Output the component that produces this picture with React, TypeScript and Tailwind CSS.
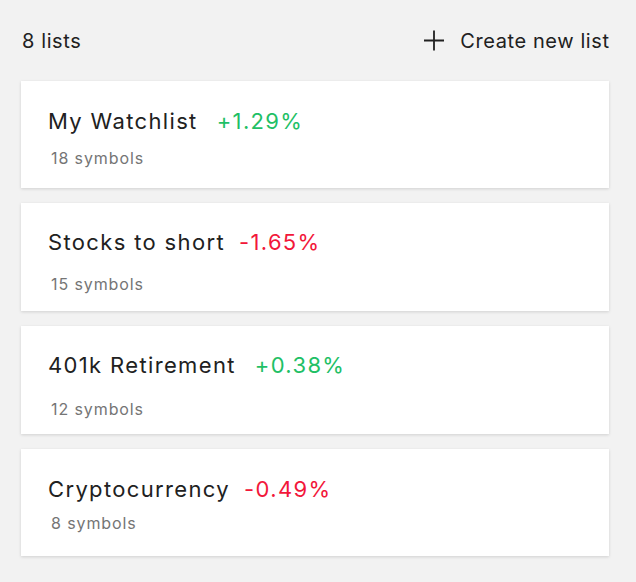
type WatchList = {
  name: string;
  change: string;
  positive: boolean;
  symbols: number;
  cardClass: string;
  countClass: string;
};

const lists: WatchList[] = [
  { name: 'My Watchlist', change: '+1.29%', positive: true, symbols: 18, cardClass: 'pt-[26px] pb-[20px]', countClass: 'mt-[13px]' },
  { name: 'Stocks to short', change: '-1.65%', positive: false, symbols: 15, cardClass: 'pt-[25px] pb-[17px]', countClass: 'mt-[18px]' },
  { name: '401k Retirement', change: '+0.38%', positive: true, symbols: 12, cardClass: 'pt-[25px] pb-[15px]', countClass: 'mt-[20px]' },
  { name: 'Cryptocurrency', change: '-0.49%', positive: false, symbols: 8, cardClass: 'pt-[26px] pb-[23px]', countClass: 'mt-[10px]' },
];

function PlusIcon() {
  return (
    <svg width="20" height="21" viewBox="0 0 20 21" fill="none" stroke="currentColor" strokeWidth="1.8">
      <path d="M10 0.5v20M0 10.5h20" />
    </svg>
  );
}

export default function App() {
  return (
    <div className="min-h-screen bg-[#f2f2f2] pl-[21px] pr-[27px] font-['Inter',sans-serif] text-[#212121]">
      <header className="ml-[1px] flex h-[81px] items-center justify-between">
        <span className="text-[20px] tracking-[0.6px]">8 lists</span>
        <button className="flex items-center gap-[16px] text-[20px] tracking-[0.6px] text-[#212121]">
          <PlusIcon />
          <span className="-mr-[0.6px]">Create new list</span>
        </button>
      </header>

      <div className="flex flex-col gap-[15px]">
        {lists.map((list) => (
          <div key={list.name} className={`bg-white px-[27px] shadow-[0_1px_3px_rgba(0,0,0,0.14)] ${list.cardClass}`}>
            <div
              className={`flex items-center text-[22px] leading-[28px] tracking-[1.35px] ${
                list.positive ? 'gap-[19px]' : 'gap-[14px]'
              }`}
            >
              <span>{list.name}</span>
              <span className={list.positive ? 'text-[#1fc066]' : 'text-[#f2173a]'}>{list.change}</span>
            </div>
            <div className={`pl-[3px] text-[16px] leading-[20px] tracking-[0.9px] text-[#757575] ${list.countClass}`}>
              {list.symbols} symbols
            </div>
          </div>
        ))}
      </div>
    </div>
  );
}
